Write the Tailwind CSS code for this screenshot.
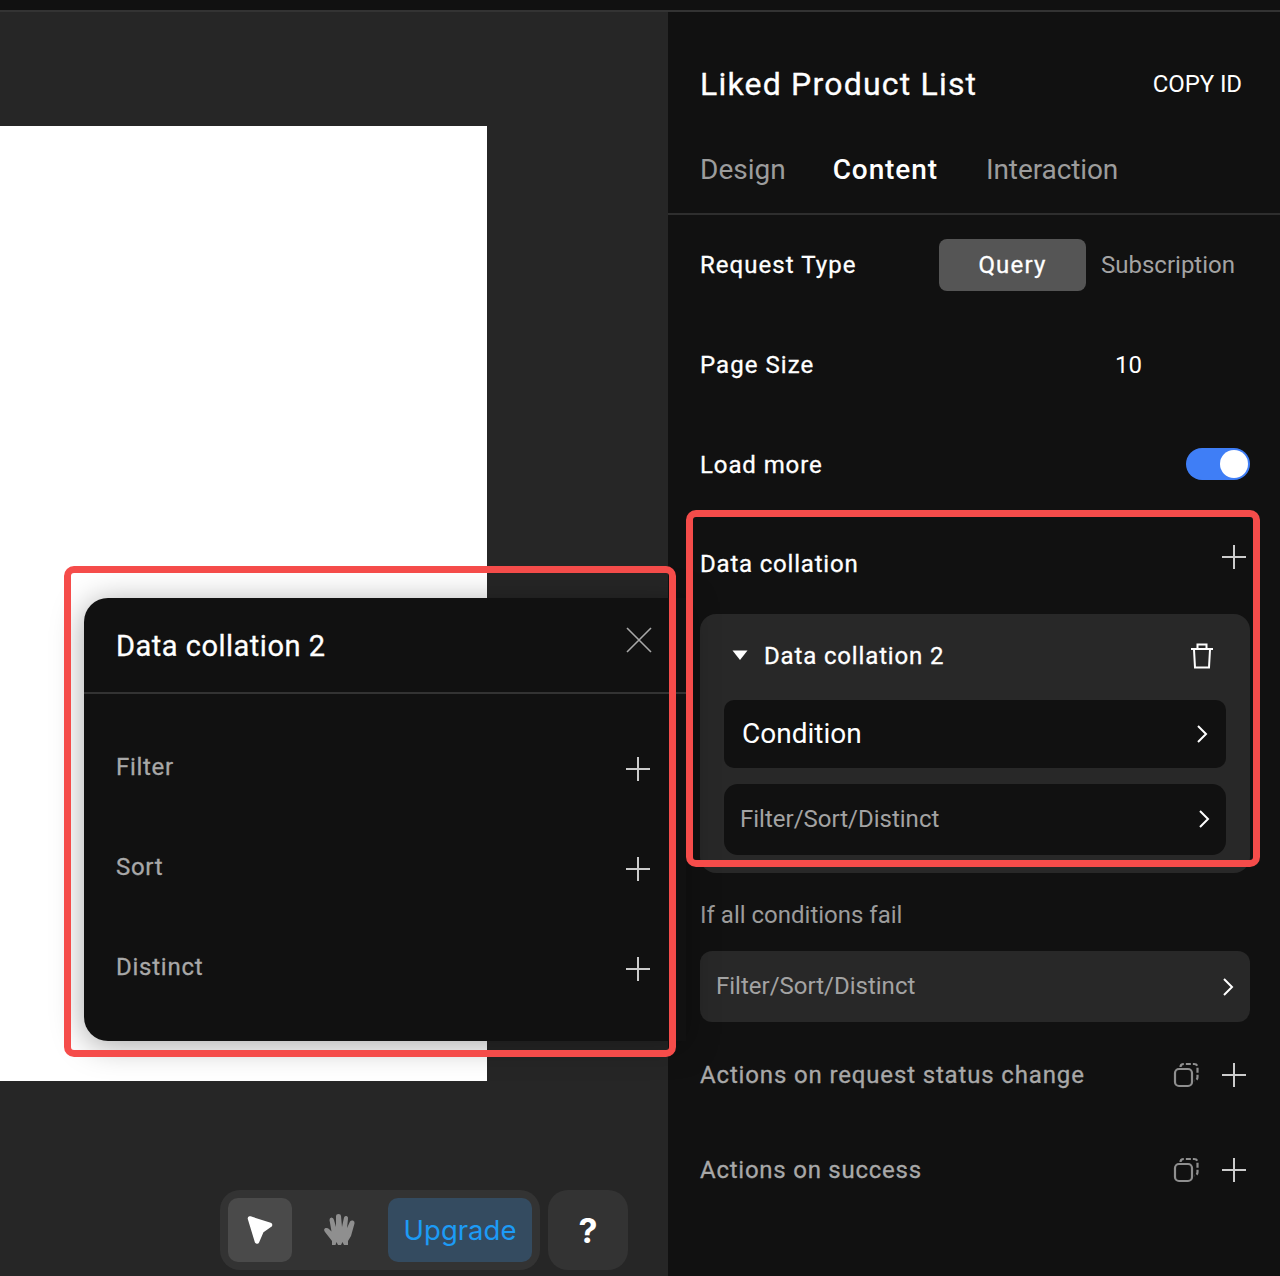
<!DOCTYPE html>
<html lang="en">
<head>
    <meta charset="UTF-8">
    <title>Liked Product List</title>
    <script src="https://cdn.jsdelivr.net/npm/@tailwindcss/browser@4"></script>
</head>
<body class="bg-[#111111] font-['Roboto',sans-serif]">
<div class="relative w-[1280px] h-[1276px] overflow-hidden flex flex-col">
    <!-- Top bar -->
    <div class="h-[12px] shrink-0 bg-[#111111] border-b-2 border-[#333333]"></div>

    <div class="flex flex-1 min-h-0">
        <!-- Canvas -->
        <div class="relative w-[668px] shrink-0 bg-[#262626]">
            <div class="absolute left-0 top-[114px] w-[487px] h-[955px] bg-white"></div>

            <!-- Toolbar -->
            <div class="absolute left-[220px] top-[1178px] flex gap-2">
                <div class="w-[320px] h-[80px] bg-[#333333] rounded-[20px] p-2 flex items-center">
                    <div class="w-[64px] h-[64px] rounded-[10px] bg-[#4a4a4a] flex items-center justify-center">
                        <svg width="30" height="32" viewBox="0 0 30 32"><path d="M5 4.500 L25 11 L16.500 17 L12 27.500 Z" fill="#ffffff" stroke="#ffffff" stroke-width="4.500" stroke-linejoin="round"/></svg>
                    </div>
                    <div class="w-[96px] h-[64px] flex items-center justify-center">
                        <svg width="34" height="34" viewBox="0 0 34 34"><path d="M9 32 L9 28 L2 19 Q0 16 2.500 15 Q4.500 14.500 6 16 L8.500 18.500 L6.500 7 Q6.500 4.500 8.500 4.500 Q10.500 4.500 11 7 L13 14 L13 3 Q13 1 15.500 1 Q18 1 18 3 L19 14 L21 4.500 Q21.500 2.500 23.500 3 Q25.500 3.500 25 6 L24 15 L27 8.500 Q28 7 30 7.500 Q32 8.500 31.500 10.500 L28 23 L25 28 L25 32 L21 32 L19.500 29 L18 32 L15 32 L13.500 29 L12.500 32 Z" fill="#8f8f8f"/></svg>
                    </div>
                    <div class="w-[144px] h-[64px] pt-[2px] rounded-[10px] bg-[#344b60] flex items-center justify-center text-[#1c9bf6] text-[27.5px] font-['Inter',sans-serif]">Upgrade</div>
                </div>
                <div class="w-[80px] h-[80px] bg-[#333333] rounded-[20px] flex items-center justify-center text-white text-[34px] font-bold font-['Inter',sans-serif]">?</div>
            </div>
        </div>

        <!-- Right panel -->
        <div class="w-[612px] shrink-0 bg-[#111111] text-white">
            <div class="h-[140px] pl-8 pr-[38px] pt-[50px] flex justify-between items-start">
                <span class="text-[32px] leading-[44px] [-webkit-text-stroke:0.3px] tracking-[1.2px]">Liked Product List</span>
                <span class="text-[24px] leading-[44px] tracking-[-0.1px]">COPY ID</span>
            </div>
            <div class="h-[63px] pl-8 flex gap-12 border-b-2 border-[#2e2e2e] text-[28px] leading-[36px] text-[#9c9c9c]">
                <span>Design</span>
                <span class="ml-[-1px] text-white font-medium tracking-[0.9px]">Content</span>
                <span class="tracking-[-0.1px]">Interaction</span>
            </div>
            <div class="h-[100px] pl-8 pt-[24px] flex items-start">
                <span class="w-[239px] text-[24px] leading-[52px] [-webkit-text-stroke:0.3px] tracking-[1.05px]">Request Type</span>
                <span class="w-[147px] h-[52px] rounded-lg bg-[#555555] flex items-center justify-center text-[24px] [-webkit-text-stroke:0.3px] tracking-[1.2px]">Query</span>
                <span class="ml-[15px] text-[24px] leading-[52px] text-[#a3a3a3]">Subscription</span>
            </div>
            <div class="h-[100px] pl-8 flex items-center">
                <span class="w-[415px] text-[24px] [-webkit-text-stroke:0.3px] tracking-[1.05px]">Page Size</span>
                <span class="text-[24px]">10</span>
            </div>
            <div class="h-[99px] pb-[1px] pl-8 pr-[30px] flex items-center justify-between">
                <span class="mt-[1px] text-[24px] [-webkit-text-stroke:0.3px] tracking-[0.9px]">Load more</span>
                <span class="w-[64px] h-[32px] rounded-full bg-[#3f7ef6] flex items-center justify-end pr-[2px]">
                    <span class="w-[28px] h-[28px] rounded-full bg-white"></span>
                </span>
            </div>

            <div class="ml-8 mr-[30px]">
                <div class="h-[100px] pt-[20px] flex justify-between items-start">
                    <span class="text-[24px] leading-[60px] [-webkit-text-stroke:0.3px] tracking-[0.8px]">Data collation</span>
                    <svg class="mt-[11px] mr-[4px]" width="24" height="24" viewBox="0 0 24 24" stroke="#cccccc" stroke-width="2"><path d="M12 0V24M0 12H24"/></svg>
                </div>

                <div class="h-[259px] rounded-2xl bg-[#282828] px-6">
                    <div class="h-[86px] pb-[2px] flex items-center justify-between">
                        <div class="flex items-center gap-4 pl-2">
                            <svg class="mt-[-2px]" width="16" height="12" viewBox="0 0 16 12"><path d="M0.500 1.500H15.500L8 11Z" fill="#ffffff"/></svg>
                            <span class="text-[24px] [-webkit-text-stroke:0.3px] tracking-[0.85px]">Data collation 2</span>
                        </div>
                        <svg class="mr-[12px]" width="24" height="26" viewBox="0 0 24 26" fill="none" stroke="#ffffff" stroke-width="2"><path d="M1 6H23M7.500 5.500V1.500H16.500V5.500M4 6.500L5 24.500H19L20 6.500"/></svg>
                    </div>
                    <div class="h-[68px] rounded-[10px] bg-[#111111] pl-[18px] pr-[18px] flex items-center justify-between">
                        <span class="text-[28px]">Condition</span>
                        <svg width="12" height="20" viewBox="0 0 12 20" fill="none" stroke="#ffffff" stroke-width="2"><path d="M2 2L10 10L2 18"/></svg>
                    </div>
                    <div class="mt-4 h-[71px] pb-[2px] rounded-[14px] bg-[#111111] pl-4 pr-[16px] flex items-center justify-between">
                        <span class="text-[24px] text-[#a3a3a3]">Filter/Sort/Distinct</span>
                        <svg class="mt-[1px]" width="12" height="20" viewBox="0 0 12 20" fill="none" stroke="#ffffff" stroke-width="2"><path d="M2 2L10 10L2 18"/></svg>
                    </div>
                </div>

                <div class="h-[78px] flex items-center text-[24px] text-[#9c9c9c] pt-[6px]">If all conditions fail</div>
                <div class="h-[71px] pb-[2px] rounded-xl bg-[#282828] pl-4 pr-[16px] flex items-center justify-between">
                    <span class="text-[24px] text-[#a3a3a3]">Filter/Sort/Distinct</span>
                    <svg class="mt-[2px]" width="12" height="20" viewBox="0 0 12 20" fill="none" stroke="#ffffff" stroke-width="2"><path d="M2 2L10 10L2 18"/></svg>
                </div>

                <div class="h-[105px] flex items-center justify-between">
                    <span class="text-[24px] [-webkit-text-stroke:0.3px] tracking-[0.85px] text-[#a8a8a8]">Actions on request status change</span>
                    <div class="flex items-center gap-[23px] mr-[4px]">
                        <svg width="26" height="26" viewBox="0 0 26 26" fill="none" stroke="#8f8f8f" stroke-width="2.200"><rect x="2" y="7" width="17" height="17" rx="4"/><path d="M7.500 5Q7.500 2 11 2H21Q24.500 2 24.500 5.500V15Q24.500 18 21.500 18.500" stroke-dasharray="5 2"/></svg>
                        <svg width="24" height="24" viewBox="0 0 24 24" stroke="#cccccc" stroke-width="2"><path d="M12 0V24M0 12H24"/></svg>
                    </div>
                </div>
                <div class="h-[86px] flex items-center justify-between">
                    <span class="text-[24px] [-webkit-text-stroke:0.3px] tracking-[0.75px] text-[#a8a8a8]">Actions on success</span>
                    <div class="flex items-center gap-[23px] mr-[4px]">
                        <svg width="26" height="26" viewBox="0 0 26 26" fill="none" stroke="#8f8f8f" stroke-width="2.200"><rect x="2" y="7" width="17" height="17" rx="4"/><path d="M7.500 5Q7.500 2 11 2H21Q24.500 2 24.500 5.500V15Q24.500 18 21.500 18.500" stroke-dasharray="5 2"/></svg>
                        <svg width="24" height="24" viewBox="0 0 24 24" stroke="#cccccc" stroke-width="2"><path d="M12 0V24M0 12H24"/></svg>
                    </div>
                </div>
            </div>
        </div>
    </div>

    <!-- Popup over the canvas -->
    <div class="absolute left-[84px] top-[598px] w-[602px] h-[443px] bg-[#111111] rounded-l-[24px] shadow-[0_4px_32px_rgba(0,0,0,0.35)] text-white">
        <div class="h-[96px] pl-8 pr-[17px] border-b-2 border-[#333333] flex items-center justify-between">
            <span class="text-[29px] [-webkit-text-stroke:0.3px] tracking-[0.5px] mt-[4px]">Data collation 2</span>
            <svg class="mb-[10px] mr-[17px]" width="26" height="26" viewBox="0 0 26 26" stroke="#a8a8a8" stroke-width="1.600"><path d="M1 1L25 25M25 1L1 25"/></svg>
        </div>
        <div class="pt-[25px]">
            <div class="h-[100px] pl-8 pr-[36px] flex items-center justify-between">
                <span class="text-[24px] text-[#a8a8a8] [-webkit-text-stroke:0.3px] tracking-[0.7px] mt-[-5px]">Filter</span>
                <svg width="24" height="24" viewBox="0 0 24 24" stroke="#cccccc" stroke-width="2"><path d="M12 0V24M0 12H24"/></svg>
            </div>
            <div class="h-[100px] pl-8 pr-[36px] flex items-center justify-between">
                <span class="text-[24px] text-[#a8a8a8] [-webkit-text-stroke:0.3px] tracking-[0.7px] mt-[-5px]">Sort</span>
                <svg width="24" height="24" viewBox="0 0 24 24" stroke="#cccccc" stroke-width="2"><path d="M12 0V24M0 12H24"/></svg>
            </div>
            <div class="h-[100px] pl-8 pr-[36px] flex items-center justify-between">
                <span class="text-[24px] text-[#a8a8a8] [-webkit-text-stroke:0.3px] tracking-[0.75px] mt-[-5px]">Distinct</span>
                <svg width="24" height="24" viewBox="0 0 24 24" stroke="#cccccc" stroke-width="2"><path d="M12 0V24M0 12H24"/></svg>
            </div>
        </div>
    </div>

    <!-- Red annotation boxes -->
    <div class="absolute left-[64px] top-[566px] w-[612px] h-[491px] border-[7px] border-[#f54c4a] rounded-[10px]"></div>
    <div class="absolute left-[686px] top-[510px] w-[574px] h-[357px] border-[7px] border-[#f54c4a] rounded-[10px]"></div>
</div>
</body>
</html>
